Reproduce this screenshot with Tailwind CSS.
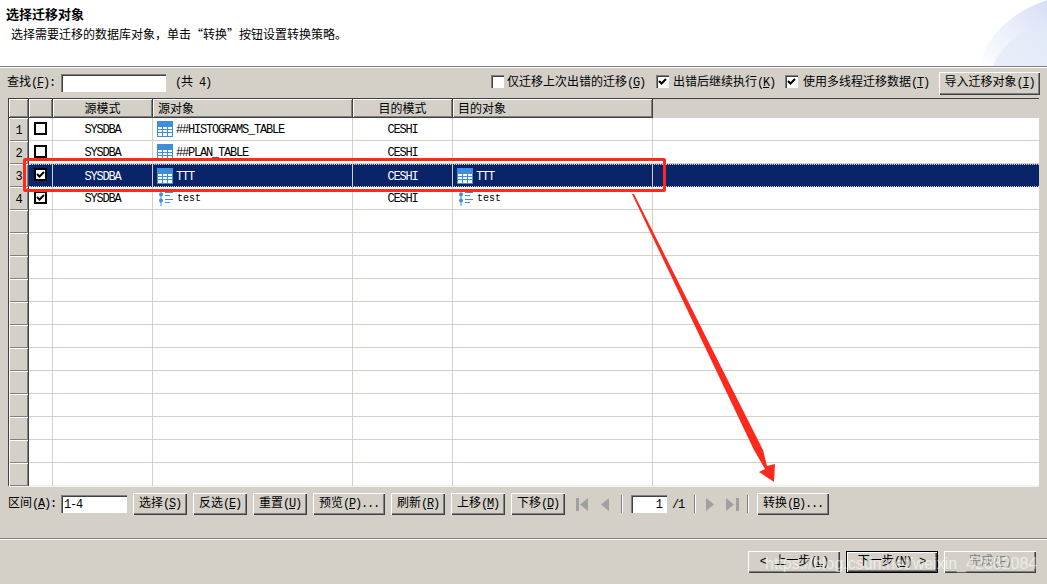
<!DOCTYPE html>
<html lang="zh-CN">
<head>
    <meta charset="UTF-8">
    <title>选择迁移对象</title>
    <script src="https://cdn.jsdelivr.net/npm/@tailwindcss/browser@4"></script>
</head>
<body>
<div class="relative w-[1047px] h-[584px] overflow-hidden flex flex-col bg-[#d4d0c8] text-[12px] leading-none text-black font-['Liberation_Mono','Noto_Sans_CJK_SC',monospace]">

    <!-- header -->
    <div class="relative h-[66px] bg-white shrink-0">
        <h1 class="absolute left-[6px] top-[7px] text-[13px] font-bold font-['Noto_Sans_CJK_SC',sans-serif]">选择迁移对象</h1>
        <p class="absolute left-[11px] top-[28px] font-['Noto_Sans_CJK_SC',sans-serif]">选择需要迁移的数据库对象，单击“转换”按钮设置转换策略。</p>
        <svg class="absolute right-0 top-0" width="80" height="66" viewBox="0 0 80 66">
            <defs>
                <linearGradient id="swoosh" x1="0" y1="1" x2="1" y2="0">
                    <stop offset="0" stop-color="#ffffff"/>
                    <stop offset="1" stop-color="#d5dff5"/>
                </linearGradient>
            </defs>
            <path d="M12 66C20 36 44 12 80 0V66Z" fill="url(#swoosh)"/>
            <path d="M26 66C34 46 54 30 80 24V66Z" fill="#e3e9f8" opacity="0.7"/>
        </svg>
    </div>
    <div class="h-[2px] shrink-0 border-t border-b border-t-[#808080] border-b-white"></div>

    <!-- search toolbar -->
    <div class="h-[30px] shrink-0 flex items-center pl-[7px] pr-[7px]">
        <label class="w-[54px]">查找<span class="tracking-[-1.2px]">(<u>F</u>):</span></label>
        <input class="w-[105px] h-[18px] bg-white shadow-[inset_1px_1px_0_#808080,inset_2px_2px_0_#404040,inset_-1px_-1px_0_#fff]">
        <span class="ml-[9px] tracking-[-1.2px]">(<span class="tracking-normal">共</span> 4)</span>
        <div class="ml-auto flex items-center">
            <label class="w-[165px] flex items-center gap-[3px]">
                <span class="w-[13px] h-[13px] mb-[3px] bg-white shadow-[inset_1px_1px_0_#808080,inset_2px_2px_0_#404040,inset_-1px_-1px_0_#fff]"></span>
                <span>仅迁移上次出错的迁移<span class="tracking-[-1.2px]">(<u>G</u>)</span></span>
            </label>
            <label class="w-[129px] flex items-center gap-[4px]">
                <span class="w-[13px] h-[13px] mb-[3px] bg-white shadow-[inset_1px_1px_0_#808080,inset_2px_2px_0_#404040,inset_-1px_-1px_0_#fff]">
                    <svg width="13" height="13" viewBox="0 0 13 13"><path d="M3 6l2.5 2.5L10 4" fill="none" stroke="#000" stroke-width="2"/></svg>
                </span>
                <span>出错后继续执行<span class="tracking-[-1.2px]">(<u>K</u>)</span></span>
            </label>
            <label class="w-[154px] flex items-center gap-[5px]">
                <span class="w-[13px] h-[13px] mb-[3px] bg-white shadow-[inset_1px_1px_0_#808080,inset_2px_2px_0_#404040,inset_-1px_-1px_0_#fff]">
                    <svg width="13" height="13" viewBox="0 0 13 13"><path d="M3 6l2.5 2.5L10 4" fill="none" stroke="#000" stroke-width="2"/></svg>
                </span>
                <span>使用多线程迁移数据<span class="tracking-[-1.2px]">(<u>T</u>)</span></span>
            </label>
            <button class="w-[101px] h-[23px] bg-[#d4d0c8] shadow-[inset_1px_1px_0_#fff,inset_-1px_-1px_0_#404040,inset_-2px_-2px_0_#808080]">导入迁移对象<span class="tracking-[-1.2px]">(<u>I</u>)</span></button>
        </div>
    </div>

    <!-- grid -->
    <div class="mx-[8px] h-[389px] shrink-0 border-t border-l border-t-[#404040] border-l-[#404040] border-b-2 border-b-[#f4f2ee] bg-white">
        <div class="grid grid-cols-[20px_24px_100px_200px_100px_200px_1fr] h-[19px] bg-[#d4d0c8]">
            <div class="border-b border-r border-[#404040] shadow-[inset_1px_1px_0_#fff,inset_-1px_-1px_0_#808080]"></div>
            <div class="border-b border-r border-[#404040] shadow-[inset_1px_1px_0_#fff,inset_-1px_-1px_0_#808080]"></div>
            <div class="flex items-center justify-center pt-[3px] border-b border-r border-[#404040] shadow-[inset_1px_1px_0_#fff,inset_-1px_-1px_0_#808080]">源模式</div>
            <div class="flex items-center pl-[5px] pt-[3px] border-b border-r border-[#404040] shadow-[inset_1px_1px_0_#fff,inset_-1px_-1px_0_#808080]">源对象</div>
            <div class="flex items-center justify-center pt-[3px] border-b border-r border-[#404040] shadow-[inset_1px_1px_0_#fff,inset_-1px_-1px_0_#808080]">目的模式</div>
            <div class="flex items-center pl-[5px] pt-[3px] border-b border-r border-[#404040] shadow-[inset_1px_1px_0_#fff,inset_-1px_-1px_0_#808080]">目的对象</div>
            <div></div>
        </div>

        <!-- row 1 -->
        <div class="grid grid-cols-[20px_24px_100px_200px_100px_200px_1fr] h-[23px] tracking-[-1.2px]">
            <div class="flex items-center justify-center pt-[2px] bg-[#d4d0c8] border-r border-[#404040] shadow-[inset_1px_1px_0_#fff,inset_-1px_-1px_0_#808080]">1</div>
            <div class="flex items-center pl-[5px] pb-[2px] border-r border-b border-[#d4d0c8]"><span class="w-[13px] h-[13px] border-2 border-black bg-white"></span></div>
            <div class="flex items-center justify-center pt-[2px] border-r border-b border-[#d4d0c8]">SYSDBA</div>
            <div class="flex items-center gap-[3px] pl-[4px] border-r border-b border-[#d4d0c8]">
                <svg width="16" height="16" viewBox="0 0 16 16"><path fill="#3d8edb" d="M0 0h16v16H0z"/><path fill="#fff" d="M1 6h4v2H1zM6 6h4v2H6zM11 6h4v2h-4zM1 9h4v2H1zM6 9h4v2H6zM11 9h4v2h-4zM1 12h4v3H1zM6 12h4v3H6zM11 12h4v3h-4z"/></svg>
                <span class="pt-[2px]">##HISTOGRAMS_TABLE</span>
            </div>
            <div class="flex items-center justify-center pt-[2px] border-r border-b border-[#d4d0c8]">CESHI</div>
            <div class="border-r border-b border-[#d4d0c8]"></div>
            <div class="border-b border-[#d4d0c8]"></div>
        </div>
        <!-- row 2 -->
        <div class="grid grid-cols-[20px_24px_100px_200px_100px_200px_1fr] h-[23px] tracking-[-1.2px]">
            <div class="flex items-center justify-center pt-[2px] bg-[#d4d0c8] border-r border-[#404040] shadow-[inset_1px_1px_0_#fff,inset_-1px_-1px_0_#808080]">2</div>
            <div class="flex items-center pl-[5px] pb-[2px] border-r border-b border-[#d4d0c8]"><span class="w-[13px] h-[13px] border-2 border-black bg-white"></span></div>
            <div class="flex items-center justify-center pt-[2px] border-r border-b border-[#d4d0c8]">SYSDBA</div>
            <div class="flex items-center gap-[3px] pl-[4px] border-r border-b border-[#d4d0c8]">
                <svg width="16" height="16" viewBox="0 0 16 16"><path fill="#3d8edb" d="M0 0h16v16H0z"/><path fill="#fff" d="M1 6h4v2H1zM6 6h4v2H6zM11 6h4v2h-4zM1 9h4v2H1zM6 9h4v2H6zM11 9h4v2h-4zM1 12h4v3H1zM6 12h4v3H6zM11 12h4v3h-4z"/></svg>
                <span class="pt-[2px]">##PLAN_TABLE</span>
            </div>
            <div class="flex items-center justify-center pt-[2px] border-r border-b border-[#d4d0c8]">CESHI</div>
            <div class="border-r border-b border-[#d4d0c8]"></div>
            <div class="border-b border-[#d4d0c8]"></div>
        </div>
        <!-- row 3, selected -->
        <div class="relative grid grid-cols-[20px_24px_100px_200px_100px_200px_1fr] h-[23px] tracking-[-1.2px] text-white">
            <div class="flex items-center justify-center pt-[2px] text-black bg-[#d4d0c8] border-r border-[#404040] shadow-[inset_1px_1px_0_#fff,inset_-1px_-1px_0_#808080]">3</div>
            <div class="flex items-center pl-[5px] pb-[2px] bg-[#0a246a] border-r border-[#d4d0c8]">
                <span class="w-[13px] h-[13px] border-2 border-black bg-white"><svg width="9" height="9" viewBox="0 0 9 9"><path d="M1 4l2.5 2.5L8 2" fill="none" stroke="#000" stroke-width="2"/></svg></span>
            </div>
            <div class="flex items-center justify-center pt-[2px] bg-[#0a246a] border-r border-[#d4d0c8]">SYSDBA</div>
            <div class="flex items-center gap-[3px] pl-[4px] bg-[#0a246a] border-r border-[#d4d0c8]">
                <svg width="16" height="16" viewBox="0 0 16 16"><path fill="#3d8edb" d="M0 0h16v16H0z"/><path fill="#fff" d="M1 6h4v2H1zM6 6h4v2H6zM11 6h4v2h-4zM1 9h4v2H1zM6 9h4v2H6zM11 9h4v2h-4zM1 12h4v3H1zM6 12h4v3H6zM11 12h4v3h-4z"/></svg>
                <span class="pt-[2px]">TTT</span>
            </div>
            <div class="flex items-center justify-center pt-[2px] bg-[#0a246a] border-r border-[#d4d0c8]">CESHI</div>
            <div class="flex items-center gap-[3px] pl-[4px] bg-[#0a246a] border-r border-[#d4d0c8]">
                <svg width="16" height="16" viewBox="0 0 16 16"><path fill="#3d8edb" d="M0 0h16v16H0z"/><path fill="#fff" d="M1 6h4v2H1zM6 6h4v2H6zM11 6h4v2h-4zM1 9h4v2H1zM6 9h4v2H6zM11 9h4v2h-4zM1 12h4v3H1zM6 12h4v3H6zM11 12h4v3h-4z"/></svg>
                <span class="pt-[2px]">TTT</span>
            </div>
            <div class="bg-[#0a246a]"></div>
            <div class="absolute left-[20px] right-0 top-0 bottom-0 border-y border-dotted border-[#d4d0c8]"></div>
        </div>
        <!-- row 4 -->
        <div class="grid grid-cols-[20px_24px_100px_200px_100px_200px_1fr] h-[23px] tracking-[-1.2px]">
            <div class="flex items-center justify-center pt-[2px] bg-[#d4d0c8] border-r border-[#404040] shadow-[inset_1px_1px_0_#fff,inset_-1px_-1px_0_#808080]">4</div>
            <div class="flex items-center pl-[5px] pb-[2px] border-r border-b border-[#d4d0c8]">
                <span class="w-[13px] h-[13px] border-2 border-black bg-white"><svg width="9" height="9" viewBox="0 0 9 9"><path d="M1 4l2.5 2.5L8 2" fill="none" stroke="#000" stroke-width="2"/></svg></span>
            </div>
            <div class="flex items-center justify-center pt-[2px] border-r border-b border-[#d4d0c8]">SYSDBA</div>
            <div class="flex items-center gap-[4px] pl-[5px] border-r border-b border-[#d4d0c8]">
                <svg width="15" height="15" viewBox="0 0 15 15"><path d="M3 0v15" stroke="#3d8edb"/><circle cx="3" cy="3.5" r="2" fill="#3d8edb"/><circle cx="3" cy="9.5" r="2" fill="#3d8edb"/><path d="M7 1.5h8M7 4.5h5M7 8.5h8M7 11.5h5" stroke="#3d8edb"/></svg>
                <span class="pt-[2px] tracking-normal text-[10px]">test</span>
            </div>
            <div class="flex items-center justify-center pt-[2px] border-r border-b border-[#d4d0c8]">CESHI</div>
            <div class="flex items-center gap-[4px] pl-[5px] border-r border-b border-[#d4d0c8]">
                <svg width="15" height="15" viewBox="0 0 15 15"><path d="M3 0v15" stroke="#3d8edb"/><circle cx="3" cy="3.5" r="2" fill="#3d8edb"/><circle cx="3" cy="9.5" r="2" fill="#3d8edb"/><path d="M7 1.5h8M7 4.5h5M7 8.5h8M7 11.5h5" stroke="#3d8edb"/></svg>
                <span class="pt-[2px] tracking-normal text-[10px]">test</span>
            </div>
            <div class="border-b border-[#d4d0c8]"></div>
        </div>

        <!-- empty rows -->
        <div class="grid grid-cols-[20px_24px_100px_200px_100px_200px_1fr] h-[23px]"><div class="bg-[#d4d0c8] border-r border-[#404040] shadow-[inset_1px_1px_0_#fff,inset_-1px_-1px_0_#808080]"></div><div class="border-r border-b border-[#d4d0c8]"></div><div class="border-r border-b border-[#d4d0c8]"></div><div class="border-r border-b border-[#d4d0c8]"></div><div class="border-r border-b border-[#d4d0c8]"></div><div class="border-r border-b border-[#d4d0c8]"></div><div class="border-b border-[#d4d0c8]"></div></div>
        <div class="grid grid-cols-[20px_24px_100px_200px_100px_200px_1fr] h-[23px]"><div class="bg-[#d4d0c8] border-r border-[#404040] shadow-[inset_1px_1px_0_#fff,inset_-1px_-1px_0_#808080]"></div><div class="border-r border-b border-[#d4d0c8]"></div><div class="border-r border-b border-[#d4d0c8]"></div><div class="border-r border-b border-[#d4d0c8]"></div><div class="border-r border-b border-[#d4d0c8]"></div><div class="border-r border-b border-[#d4d0c8]"></div><div class="border-b border-[#d4d0c8]"></div></div>
        <div class="grid grid-cols-[20px_24px_100px_200px_100px_200px_1fr] h-[23px]"><div class="bg-[#d4d0c8] border-r border-[#404040] shadow-[inset_1px_1px_0_#fff,inset_-1px_-1px_0_#808080]"></div><div class="border-r border-b border-[#d4d0c8]"></div><div class="border-r border-b border-[#d4d0c8]"></div><div class="border-r border-b border-[#d4d0c8]"></div><div class="border-r border-b border-[#d4d0c8]"></div><div class="border-r border-b border-[#d4d0c8]"></div><div class="border-b border-[#d4d0c8]"></div></div>
        <div class="grid grid-cols-[20px_24px_100px_200px_100px_200px_1fr] h-[23px]"><div class="bg-[#d4d0c8] border-r border-[#404040] shadow-[inset_1px_1px_0_#fff,inset_-1px_-1px_0_#808080]"></div><div class="border-r border-b border-[#d4d0c8]"></div><div class="border-r border-b border-[#d4d0c8]"></div><div class="border-r border-b border-[#d4d0c8]"></div><div class="border-r border-b border-[#d4d0c8]"></div><div class="border-r border-b border-[#d4d0c8]"></div><div class="border-b border-[#d4d0c8]"></div></div>
        <div class="grid grid-cols-[20px_24px_100px_200px_100px_200px_1fr] h-[23px]"><div class="bg-[#d4d0c8] border-r border-[#404040] shadow-[inset_1px_1px_0_#fff,inset_-1px_-1px_0_#808080]"></div><div class="border-r border-b border-[#d4d0c8]"></div><div class="border-r border-b border-[#d4d0c8]"></div><div class="border-r border-b border-[#d4d0c8]"></div><div class="border-r border-b border-[#d4d0c8]"></div><div class="border-r border-b border-[#d4d0c8]"></div><div class="border-b border-[#d4d0c8]"></div></div>
        <div class="grid grid-cols-[20px_24px_100px_200px_100px_200px_1fr] h-[23px]"><div class="bg-[#d4d0c8] border-r border-[#404040] shadow-[inset_1px_1px_0_#fff,inset_-1px_-1px_0_#808080]"></div><div class="border-r border-b border-[#d4d0c8]"></div><div class="border-r border-b border-[#d4d0c8]"></div><div class="border-r border-b border-[#d4d0c8]"></div><div class="border-r border-b border-[#d4d0c8]"></div><div class="border-r border-b border-[#d4d0c8]"></div><div class="border-b border-[#d4d0c8]"></div></div>
        <div class="grid grid-cols-[20px_24px_100px_200px_100px_200px_1fr] h-[23px]"><div class="bg-[#d4d0c8] border-r border-[#404040] shadow-[inset_1px_1px_0_#fff,inset_-1px_-1px_0_#808080]"></div><div class="border-r border-b border-[#d4d0c8]"></div><div class="border-r border-b border-[#d4d0c8]"></div><div class="border-r border-b border-[#d4d0c8]"></div><div class="border-r border-b border-[#d4d0c8]"></div><div class="border-r border-b border-[#d4d0c8]"></div><div class="border-b border-[#d4d0c8]"></div></div>
        <div class="grid grid-cols-[20px_24px_100px_200px_100px_200px_1fr] h-[23px]"><div class="bg-[#d4d0c8] border-r border-[#404040] shadow-[inset_1px_1px_0_#fff,inset_-1px_-1px_0_#808080]"></div><div class="border-r border-b border-[#d4d0c8]"></div><div class="border-r border-b border-[#d4d0c8]"></div><div class="border-r border-b border-[#d4d0c8]"></div><div class="border-r border-b border-[#d4d0c8]"></div><div class="border-r border-b border-[#d4d0c8]"></div><div class="border-b border-[#d4d0c8]"></div></div>
        <div class="grid grid-cols-[20px_24px_100px_200px_100px_200px_1fr] h-[23px]"><div class="bg-[#d4d0c8] border-r border-[#404040] shadow-[inset_1px_1px_0_#fff,inset_-1px_-1px_0_#808080]"></div><div class="border-r border-b border-[#d4d0c8]"></div><div class="border-r border-b border-[#d4d0c8]"></div><div class="border-r border-b border-[#d4d0c8]"></div><div class="border-r border-b border-[#d4d0c8]"></div><div class="border-r border-b border-[#d4d0c8]"></div><div class="border-b border-[#d4d0c8]"></div></div>
        <div class="grid grid-cols-[20px_24px_100px_200px_100px_200px_1fr] h-[23px]"><div class="bg-[#d4d0c8] border-r border-[#404040] shadow-[inset_1px_1px_0_#fff,inset_-1px_-1px_0_#808080]"></div><div class="border-r border-b border-[#d4d0c8]"></div><div class="border-r border-b border-[#d4d0c8]"></div><div class="border-r border-b border-[#d4d0c8]"></div><div class="border-r border-b border-[#d4d0c8]"></div><div class="border-r border-b border-[#d4d0c8]"></div><div class="border-b border-[#d4d0c8]"></div></div>
        <div class="grid grid-cols-[20px_24px_100px_200px_100px_200px_1fr] h-[23px]"><div class="bg-[#d4d0c8] border-r border-[#404040] shadow-[inset_1px_1px_0_#fff,inset_-1px_-1px_0_#808080]"></div><div class="border-r border-b border-[#d4d0c8]"></div><div class="border-r border-b border-[#d4d0c8]"></div><div class="border-r border-b border-[#d4d0c8]"></div><div class="border-r border-b border-[#d4d0c8]"></div><div class="border-r border-b border-[#d4d0c8]"></div><div class="border-b border-[#d4d0c8]"></div></div>
        <div class="grid grid-cols-[20px_24px_100px_200px_100px_200px_1fr] h-[23px]"><div class="bg-[#d4d0c8] border-r border-[#404040] shadow-[inset_1px_1px_0_#fff,inset_-1px_-1px_0_#808080]"></div><div class="border-r border-[#d4d0c8]"></div><div class="border-r border-[#d4d0c8]"></div><div class="border-r border-[#d4d0c8]"></div><div class="border-r border-[#d4d0c8]"></div><div class="border-r border-[#d4d0c8]"></div><div></div></div>
    </div>

    <!-- bottom toolbar -->
    <div class="h-[51px] shrink-0 flex items-start pt-[6px] pl-[8px]">
        <label class="w-[53px] h-[22px] flex items-center">区间<span class="tracking-[-1.2px]">(<u>A</u>):</span></label>
        <div class="w-[66px] h-[18px] mt-[2px] flex items-center pl-[3px] pt-[2px] tracking-[-1.2px] bg-white shadow-[inset_1px_1px_0_#808080,inset_2px_2px_0_#404040,inset_-1px_-1px_0_#fff]">1-4</div>
        <div class="ml-[6px] flex gap-[6px]">
            <button class="w-[54px] h-[22px] bg-[#d4d0c8] shadow-[inset_1px_1px_0_#fff,inset_-1px_-1px_0_#404040,inset_-2px_-2px_0_#808080]">选择<span class="tracking-[-1.2px]">(<u>S</u>)</span></button>
            <button class="w-[54px] h-[22px] bg-[#d4d0c8] shadow-[inset_1px_1px_0_#fff,inset_-1px_-1px_0_#404040,inset_-2px_-2px_0_#808080]">反选<span class="tracking-[-1.2px]">(<u>E</u>)</span></button>
            <button class="w-[54px] h-[22px] bg-[#d4d0c8] shadow-[inset_1px_1px_0_#fff,inset_-1px_-1px_0_#404040,inset_-2px_-2px_0_#808080]">重置<span class="tracking-[-1.2px]">(<u>U</u>)</span></button>
            <button class="w-[72px] h-[22px] bg-[#d4d0c8] shadow-[inset_1px_1px_0_#fff,inset_-1px_-1px_0_#404040,inset_-2px_-2px_0_#808080]">预览<span class="tracking-[-1.2px]">(<u>P</u>)...</span></button>
            <button class="w-[54px] h-[22px] bg-[#d4d0c8] shadow-[inset_1px_1px_0_#fff,inset_-1px_-1px_0_#404040,inset_-2px_-2px_0_#808080]">刷新<span class="tracking-[-1.2px]">(<u>R</u>)</span></button>
            <button class="w-[54px] h-[22px] bg-[#d4d0c8] shadow-[inset_1px_1px_0_#fff,inset_-1px_-1px_0_#404040,inset_-2px_-2px_0_#808080]">上移<span class="tracking-[-1.2px]">(<u>M</u>)</span></button>
            <button class="w-[54px] h-[22px] bg-[#d4d0c8] shadow-[inset_1px_1px_0_#fff,inset_-1px_-1px_0_#404040,inset_-2px_-2px_0_#808080]">下移<span class="tracking-[-1.2px]">(<u>D</u>)</span></button>
        </div>
        <!-- pager -->
        <div class="h-[22px] flex items-center">
            <svg class="ml-[11px]" width="13" height="13" viewBox="0 0 13 13"><path fill="#a0a0a0" d="M0 0h3v13H0zM12 0v13L4 6.5z"/></svg>
            <svg class="ml-[12px]" width="8" height="13" viewBox="0 0 8 13"><path fill="#a0a0a0" d="M8 0v13L0 6.5z"/></svg>
            <span class="ml-[12px] w-[2px] h-[18px] border-l border-r border-l-[#808080] border-r-white"></span>
            <div class="ml-[8px] w-[36px] h-[18px] flex items-center justify-end pr-[4px] pt-[2px] bg-white shadow-[inset_1px_1px_0_#808080,inset_2px_2px_0_#404040,inset_-1px_-1px_0_#fff]">1</div>
            <span class="ml-[5px] pt-[2px] tracking-[-1.2px]">/1</span>
            <span class="ml-[10px] w-[2px] h-[18px] border-l border-r border-l-[#808080] border-r-white"></span>
            <svg class="ml-[10px]" width="8" height="13" viewBox="0 0 8 13"><path fill="#a0a0a0" d="M0 0v13l8-6.5z"/></svg>
            <svg class="ml-[12px]" width="13" height="13" viewBox="0 0 13 13"><path fill="#a0a0a0" d="M0 0v13l8-6.5zM10 0h3v13h-3z"/></svg>
            <span class="ml-[8px] w-[2px] h-[18px] border-l border-r border-l-[#808080] border-r-white"></span>
            <button class="ml-[8px] w-[72px] h-[22px] bg-[#d4d0c8] shadow-[inset_1px_1px_0_#fff,inset_-1px_-1px_0_#404040,inset_-2px_-2px_0_#808080]">转换<span class="tracking-[-1.2px]">(<u>B</u>)...</span></button>
        </div>
    </div>

    <div class="h-[2px] shrink-0 border-t border-b border-t-[#808080] border-b-white"></div>

    <!-- wizard buttons -->
    <div class="flex-1 flex justify-end items-start gap-[6px] pt-[11px] pr-[11px]">
        <button class="w-[92px] h-[22px] bg-[#d4d0c8] shadow-[inset_1px_1px_0_#fff,inset_-1px_-1px_0_#404040,inset_-2px_-2px_0_#808080]">&lt; 上一步<span class="tracking-[-1.2px]">(<u>L</u>)</span></button>
        <button class="w-[92px] h-[22px] bg-[#d4d0c8] border border-black shadow-[inset_1px_1px_0_#fff,inset_-1px_-1px_0_#404040,inset_-2px_-2px_0_#808080]">下一步<span class="tracking-[-1.2px]">(<u>N</u>)</span> &gt;</button>
        <button class="w-[92px] h-[22px] bg-[#d4d0c8] text-[#808080] shadow-[inset_1px_1px_0_#fff,inset_-1px_-1px_0_#404040,inset_-2px_-2px_0_#808080]">完成<span class="tracking-[-1.2px]">(<u>F</u>)</span></button>
    </div>

    <!-- annotations drawn on top of the screenshot -->
    <div class="absolute left-[23px] top-[158px] w-[643px] h-[34px] border-[3px] border-[#ff2a1c] rounded-[2px]"></div>
    <svg class="absolute left-0 top-0 pointer-events-none" width="1047" height="584" viewBox="0 0 1047 584">
        <path fill="#fb2a1d" d="M632 194L634 194L763 450L767 466L775 464L774 482L759 472L765 469L754 450Z"/>
    </svg>
    <span class="absolute left-[765px] top-[555px] text-[16px] leading-[18px] text-white/55 font-['Liberation_Sans',sans-serif] whitespace-nowrap">https://blog.csdn.net/weixin_42682084</span>
</div>
</body>
</html>
